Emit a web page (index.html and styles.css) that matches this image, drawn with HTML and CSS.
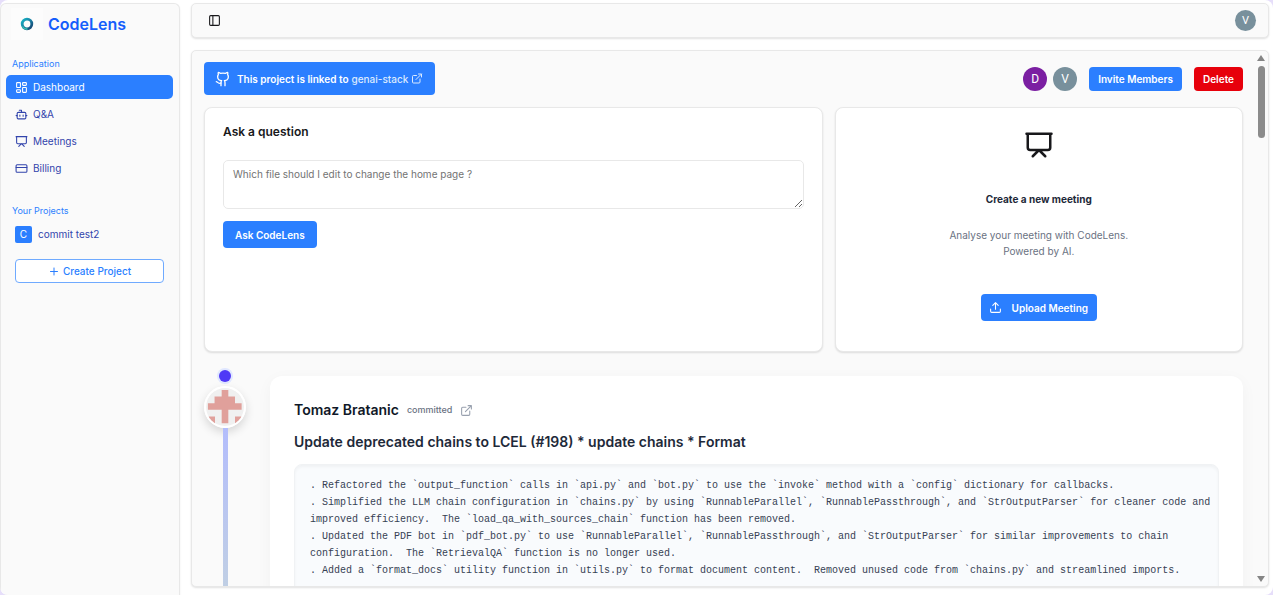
FILE: index.html
```html
<!DOCTYPE html>
<html lang="en">
<head>
<meta charset="utf-8">
<title>CodeLens</title>
<link rel="stylesheet" href="styles.css">
</head>
<body>
<svg class="sprite" aria-hidden="true">
  <symbol id="i-dashboard" viewBox="0 0 24 24"><rect x="3" y="3" width="7" height="9" rx="1"/><rect x="14" y="3" width="7" height="5" rx="1"/><rect x="14" y="12" width="7" height="9" rx="1"/><rect x="3" y="16" width="7" height="5" rx="1"/></symbol>
  <symbol id="i-bot" viewBox="0 0 24 24"><path d="M12 8V4H8"/><rect x="4" y="8" width="16" height="12" rx="2"/><path d="M2 14h2M20 14h2M15 13v2M9 13v2"/></symbol>
  <symbol id="i-board" viewBox="0 0 24 24"><path d="M2 3h20M21 3v11a2 2 0 0 1-2 2H5a2 2 0 0 1-2-2V3M7 21l5-5 5 5"/></symbol>
  <symbol id="i-card" viewBox="0 0 24 24"><rect x="2" y="5" width="20" height="14" rx="2"/><path d="M2 10h20"/></symbol>
  <symbol id="i-plus" viewBox="0 0 24 24"><path d="M5 12h14M12 5v14"/></symbol>
  <symbol id="i-panel" viewBox="0 0 24 24"><rect x="3" y="3" width="18" height="18" rx="2"/><path d="M9 3v18"/></symbol>
  <symbol id="i-github" viewBox="0 0 24 24"><path d="M15 22v-4a4.8 4.8 0 0 0-1-3.500c3 0 6-2 6-5.500.08-1.250-.27-2.480-1-3.500.28-1.150.28-2.350 0-3.500 0 0-1 0-3 1.500-2.640-.5-5.360-.5-8 0C6 2 5 2 5 2c-.3 1.150-.3 2.350 0 3.500A5.403 5.403 0 0 0 4 9c0 3.500 3 5.500 6 5.500-.39.490-.68 1.050-.85 1.650-.17.6-.22 1.230-.15 1.850v4"/><path d="M9 18c-4.510 2-5-2-7-2"/></symbol>
  <symbol id="i-external" viewBox="0 0 24 24"><path d="M15 3h6v6M10 14 21 3M18 13v6a2 2 0 0 1-2 2H5a2 2 0 0 1-2-2V8a2 2 0 0 1 2-2h6"/></symbol>
  <symbol id="i-upload" viewBox="0 0 24 24"><path d="M21 15v4a2 2 0 0 1-2 2H5a2 2 0 0 1-2-2v-4M17 8l-5-5-5 5M12 3v12"/></symbol>
</svg>
<div class="app">
  <aside class="sidebar">
    <div class="brand">
      <span class="brand-mark"><svg viewBox="0 0 16 16"><defs><linearGradient id="ring" x1="0" y1="0" x2="1" y2="1"><stop offset="0" stop-color="#16b3c4"/><stop offset=".5" stop-color="#1b7fa3"/><stop offset="1" stop-color="#143f6d"/></linearGradient></defs><circle cx="8" cy="8" r="4.800" fill="none" stroke="url(#ring)" stroke-width="2.800"/><path d="M3.500 10.500a5 5 0 0 0 5 2.500" fill="none" stroke="#35c3b0" stroke-width="1.400"/></svg></span>
      <span class="brand-name">CodeLens</span>
    </div>
    <nav class="group">
      <h2 class="group-label">Application</h2>
      <a class="nav-item active" href="#"><svg class="icon"><use href="#i-dashboard"/></svg>Dashboard</a>
      <a class="nav-item" href="#"><svg class="icon"><use href="#i-bot"/></svg>Q&amp;A</a>
      <a class="nav-item" href="#"><svg class="icon"><use href="#i-board"/></svg>Meetings</a>
      <a class="nav-item" href="#"><svg class="icon"><use href="#i-card"/></svg>Billing</a>
    </nav>
    <nav class="group">
      <h2 class="group-label">Your Projects</h2>
      <a class="nav-item project" href="#"><span class="project-initial">C</span>commit test2</a>
      <button class="create" type="button"><svg class="icon"><use href="#i-plus"/></svg>Create Project</button>
    </nav>
  </aside>
  <div class="content">
    <header class="topbar">
      <button class="toggle" type="button" aria-label="Toggle sidebar"><svg class="icon"><use href="#i-panel"/></svg></button>
      <span class="avatar grey small">V</span>
    </header>
    <main class="panel">
      <div class="page">
        <div class="toolbar">
          <div class="linked"><svg class="icon"><use href="#i-github"/></svg><p>This project is linked to <a href="#">genai-stack <svg class="icon"><use href="#i-external"/></svg></a></p></div>
          <div class="actions">
            <div class="team"><span class="avatar purple">D</span><span class="avatar grey">V</span></div>
            <button class="btn" type="button">Invite Members</button>
            <button class="btn danger" type="button">Delete</button>
          </div>
        </div>
        <div class="cards">
          <form class="card ask">
            <label class="card-title" for="question">Ask a question</label>
            <textarea id="question" placeholder="Which file should I edit to change the home page ?"></textarea>
            <button class="btn large" type="button">Ask CodeLens</button>
          </form>
          <section class="card meeting">
            <svg class="icon board"><use href="#i-board"/></svg>
            <h3>Create a new meeting</h3>
            <p>Analyse your meeting with CodeLens.<br>Powered by AI.</p>
            <button class="btn large upload" type="button"><svg class="icon"><use href="#i-upload"/></svg>Upload Meeting</button>
          </section>
        </div>
        <section class="commit">
          <div class="timeline">
            <span class="dot"></span>
            <svg class="identicon" viewBox="0 0 40 40" role="img" aria-label="Tomaz Bratanic"><circle cx="20" cy="20" r="20" fill="#f0f0f0"/><path fill="#e0a09b" d="M16.500 2h7v7h7v7h7v7H23.500v14h-7V23H2v-7h7V9h7.500zM2.500 30h7v7h-2l-5-5zM30.500 30h7v2l-5 5h-2z"/></svg>
            <span class="line"></span>
          </div>
          <article class="commit-card">
            <div class="author"><strong>Tomaz Bratanic</strong><span>committed</span><a href="#" aria-label="Open commit"><svg class="icon"><use href="#i-external"/></svg></a></div>
            <h3>Update deprecated chains to LCEL (#198) * update chains * Format</h3>
<pre class="summary">. Refactored the `output_function` calls in `api.py` and `bot.py` to use the `invoke` method with a `config` dictionary for callbacks.
. Simplified the LLM chain configuration in `chains.py` by using `RunnableParallel`, `RunnablePassthrough`, and `StrOutputParser` for cleaner code and improved efficiency.  The `load_qa_with_sources_chain` function has been removed.
. Updated the PDF bot in `pdf_bot.py` to use `RunnableParallel`, `RunnablePassthrough`, and `StrOutputParser` for similar improvements to chain configuration.  The `RetrievalQA` function is no longer used.
. Added a `format_docs` utility function in `utils.py` to format document content.  Removed unused code from `chains.py` and streamlined imports.</pre>
          </article>
        </section>
      </div>
      <div class="scrollbar" aria-hidden="true"><span class="arrow up"></span><span class="thumb"></span><span class="arrow down"></span></div>
    </main>
  </div>
</div>
</body>
</html>
```
FILE: styles.css
```css
:root {
  --blue: #2b7fff;
  --line: #e8e8e8;
  --surface: #fafafa;
}
* { box-sizing: border-box; }
body {
  margin: 0;
  background: #e6defa;
  font: 10px/16px Inter, "Liberation Sans", sans-serif;
  color: #18181b;
}
h2, h3, p, pre { margin: 0; }
button, textarea { font: inherit; }
a { color: inherit; text-decoration: none; }
.sprite { display: none; }
.icon {
  width: 13px;
  height: 13px;
  flex: none;
  fill: none;
  stroke: currentColor;
  stroke-width: 2;
  stroke-linecap: round;
  stroke-linejoin: round;
}
.app {
  display: flex;
  gap: 11px;
  height: 100vh;
  padding: 3px 4px 0 0;
  background: #fff;
  border-radius: 8px;
  overflow: hidden;
}

/* Sidebar */
.sidebar {
  width: 180px;
  flex: none;
  background: var(--surface);
  border: 1px solid var(--line);
  border-bottom: 0;
  border-radius: 6px 6px 0 0;
  box-shadow: 0 1px 2px rgb(0 0 0 / 8%);
}
.brand { display: flex; align-items: center; gap: 5px; padding: 4px 10px 6px; height: 42px; }
.brand-mark { display: grid; place-items: center; width: 32px; height: 32px; background: #fcfcfc; }
.brand-mark svg { width: 16px; height: 16px; }
.brand-name { font-size: 16px; font-weight: 600; line-height: 24px; color: #155dfc; }
.group { display: flex; flex-direction: column; gap: 3px; padding: 10px 6px 13px 5px; }
.group-label { padding: 0 6px; font-size: 9px; font-weight: 400; line-height: 16px; color: var(--blue); }
.nav-item {
  display: flex;
  align-items: center;
  gap: 5px;
  height: 24px;
  padding: 0 9px;
  border-radius: 5px;
  color: #3244ac;
}
.nav-item.active { background: var(--blue); color: #fff; }
.project { gap: 6px; }
.project-initial { width: 17px; line-height: 17px; text-align: center; color: #fff; background: var(--blue); border-radius: 2px; }
.create {
  display: flex;
  align-items: center;
  justify-content: center;
  gap: 3px;
  height: 24px;
  margin: 10px 9px 0;
  color: var(--blue);
  background: #fff;
  border: 1px solid #6faaff;
  border-radius: 4px;
  font-weight: 500;
}
.create .icon { width: 12px; }

/* Top bar and main panel */
.content { display: flex; flex-direction: column; gap: 12px; flex: 1; min-width: 0; padding-bottom: 8px; }
.topbar, .panel {
  background: var(--surface);
  border: 1px solid var(--line);
  border-radius: 5px;
  box-shadow: 0 1px 2px rgb(0 0 0 / 12%);
}
.topbar { display: flex; align-items: center; justify-content: space-between; height: 35px; flex: none; padding: 0 12px 0 16px; }
.toggle { display: flex; padding: 0; border: 0; background: none; color: #18181b; }
.avatar { display: grid; place-items: center; width: 24px; height: 24px; border-radius: 50%; color: #fff; font-family: Roboto, sans-serif; font-size: 12px; }
.avatar.small { width: 21px; height: 21px; font-size: 11px; }
.grey { background: #78909c; }
.purple { background: #7b1fa2; }
.panel { display: flex; flex: 1; min-height: 0; overflow: hidden; }
.page { flex: 1; min-width: 0; padding: 11px 11px 0 12px; }
.scrollbar { display: flex; flex-direction: column; align-items: center; width: 14px; padding: 4px 0; flex: none; }
.arrow { border: 4px solid transparent; }
.up { border-top: 0; border-bottom: 6px solid #858585; }
.down { border-bottom: 0; border-top: 6px solid #858585; margin-top: auto; }
.thumb { width: 7px; height: 72px; margin-top: 5px; background: #8b8b8b; border-radius: 4px; }

.toolbar { display: flex; align-items: center; justify-content: space-between; margin-bottom: 12px; }
.linked { display: flex; align-items: center; gap: 6px; height: 33px; padding: 0 12px 0 11px; background: var(--blue); color: #fff; border-radius: 4px; font-weight: 600; }
.linked > .icon { width: 16px; height: 16px; }
.linked p { display: flex; gap: 3px; }
.linked a { display: inline-flex; align-items: center; gap: 3px; color: #dbeafe; font-weight: 500; }
.linked a .icon { width: 12px; }
.actions { display: flex; align-items: center; gap: 12px; }
.team { display: flex; gap: 6px; }
.btn {
  display: inline-flex;
  align-items: center;
  height: 24px;
  padding: 0 9px;
  border: 0;
  border-radius: 4px;
  background: var(--blue);
  color: #fff;
  font-weight: 600;
}
.btn.danger { background: #e7000b; }
.btn.large { height: 27px; padding: 0 12px; }

.cards { display: grid; grid-template-columns: repeat(5, minmax(0, 1fr)); gap: 12px; }
.card { background: #fff; border: 1px solid var(--line); border-radius: 8px; box-shadow: 0 1px 2px rgb(0 0 0 / 12%); height: 245px; }
.ask { grid-column: span 3; display: flex; flex-direction: column; align-items: flex-start; padding: 16px 18px; }
.card-title { font-size: 12px; font-weight: 600; }
.ask textarea {
  width: 100%;
  height: 49px;
  margin: 20px 0 12px;
  padding: 5px 9px;
  border: 1px solid #e8e8e8;
  border-radius: 5px;
  resize: vertical;
  background: #fff;
}
.ask textarea::placeholder { color: #737373; }
.meeting { grid-column: span 2; display: flex; flex-direction: column; align-items: center; padding: 22px 18px; text-align: center; }
.board { width: 30px; height: 30px; }
.meeting h3 { margin-top: 31px; font-size: 10px; font-weight: 700; color: #1e2939; }
.meeting p { margin: 20px 0 35px; color: #6a7282; }
.upload { gap: 10px; }
.upload.large { padding: 0 9px 0 8px; }

/* Commit history */
.commit { display: flex; gap: 24px; margin-top: 18px; }
.timeline { display: flex; flex-direction: column; align-items: center; width: 42px; }
.dot { width: 12px; height: 12px; border-radius: 50%; background: #4f39f6; box-shadow: 0 0 0 2px #e0e7ff; }
.identicon { width: 42px; height: 42px; flex: none; margin-top: 4px; border: 2px solid #fff; border-radius: 50%; box-shadow: 0 4px 10px rgb(0 0 0 / 15%); }
.line { width: 5px; flex: 1; background: linear-gradient(#b3bdfc, #c0cfe4 160px); }
.commit-card { flex: 1; min-width: 0; margin-top: 6px; padding: 24px 24px 40px; background: #fff; border-radius: 12px; box-shadow: 0 4px 16px rgb(0 0 0 / 4%); }
.author { display: flex; align-items: center; gap: 8px; height: 20px; color: #6a7282; }
.author strong { font-size: 14px; font-weight: 600; color: #101828; }
.author span { font-size: 9px; font-weight: 500; }
.author a { display: flex; color: #99a1af; }
.commit-card h3 { margin: 12px 0; font-size: 14px; font-weight: 600; line-height: 20px; color: #1e2939; }
.summary {
  padding: 12px 4px 24px 15px;
  background: #f9fbfd;
  border: 1px solid #f0f2f4;
  border-radius: 8px;
  box-shadow: inset 0 2px 3px rgb(0 0 0 / 4%);
  font: 10px/17px "Liberation Mono", monospace;
  color: #364153;
  white-space: pre-wrap;
}
```
